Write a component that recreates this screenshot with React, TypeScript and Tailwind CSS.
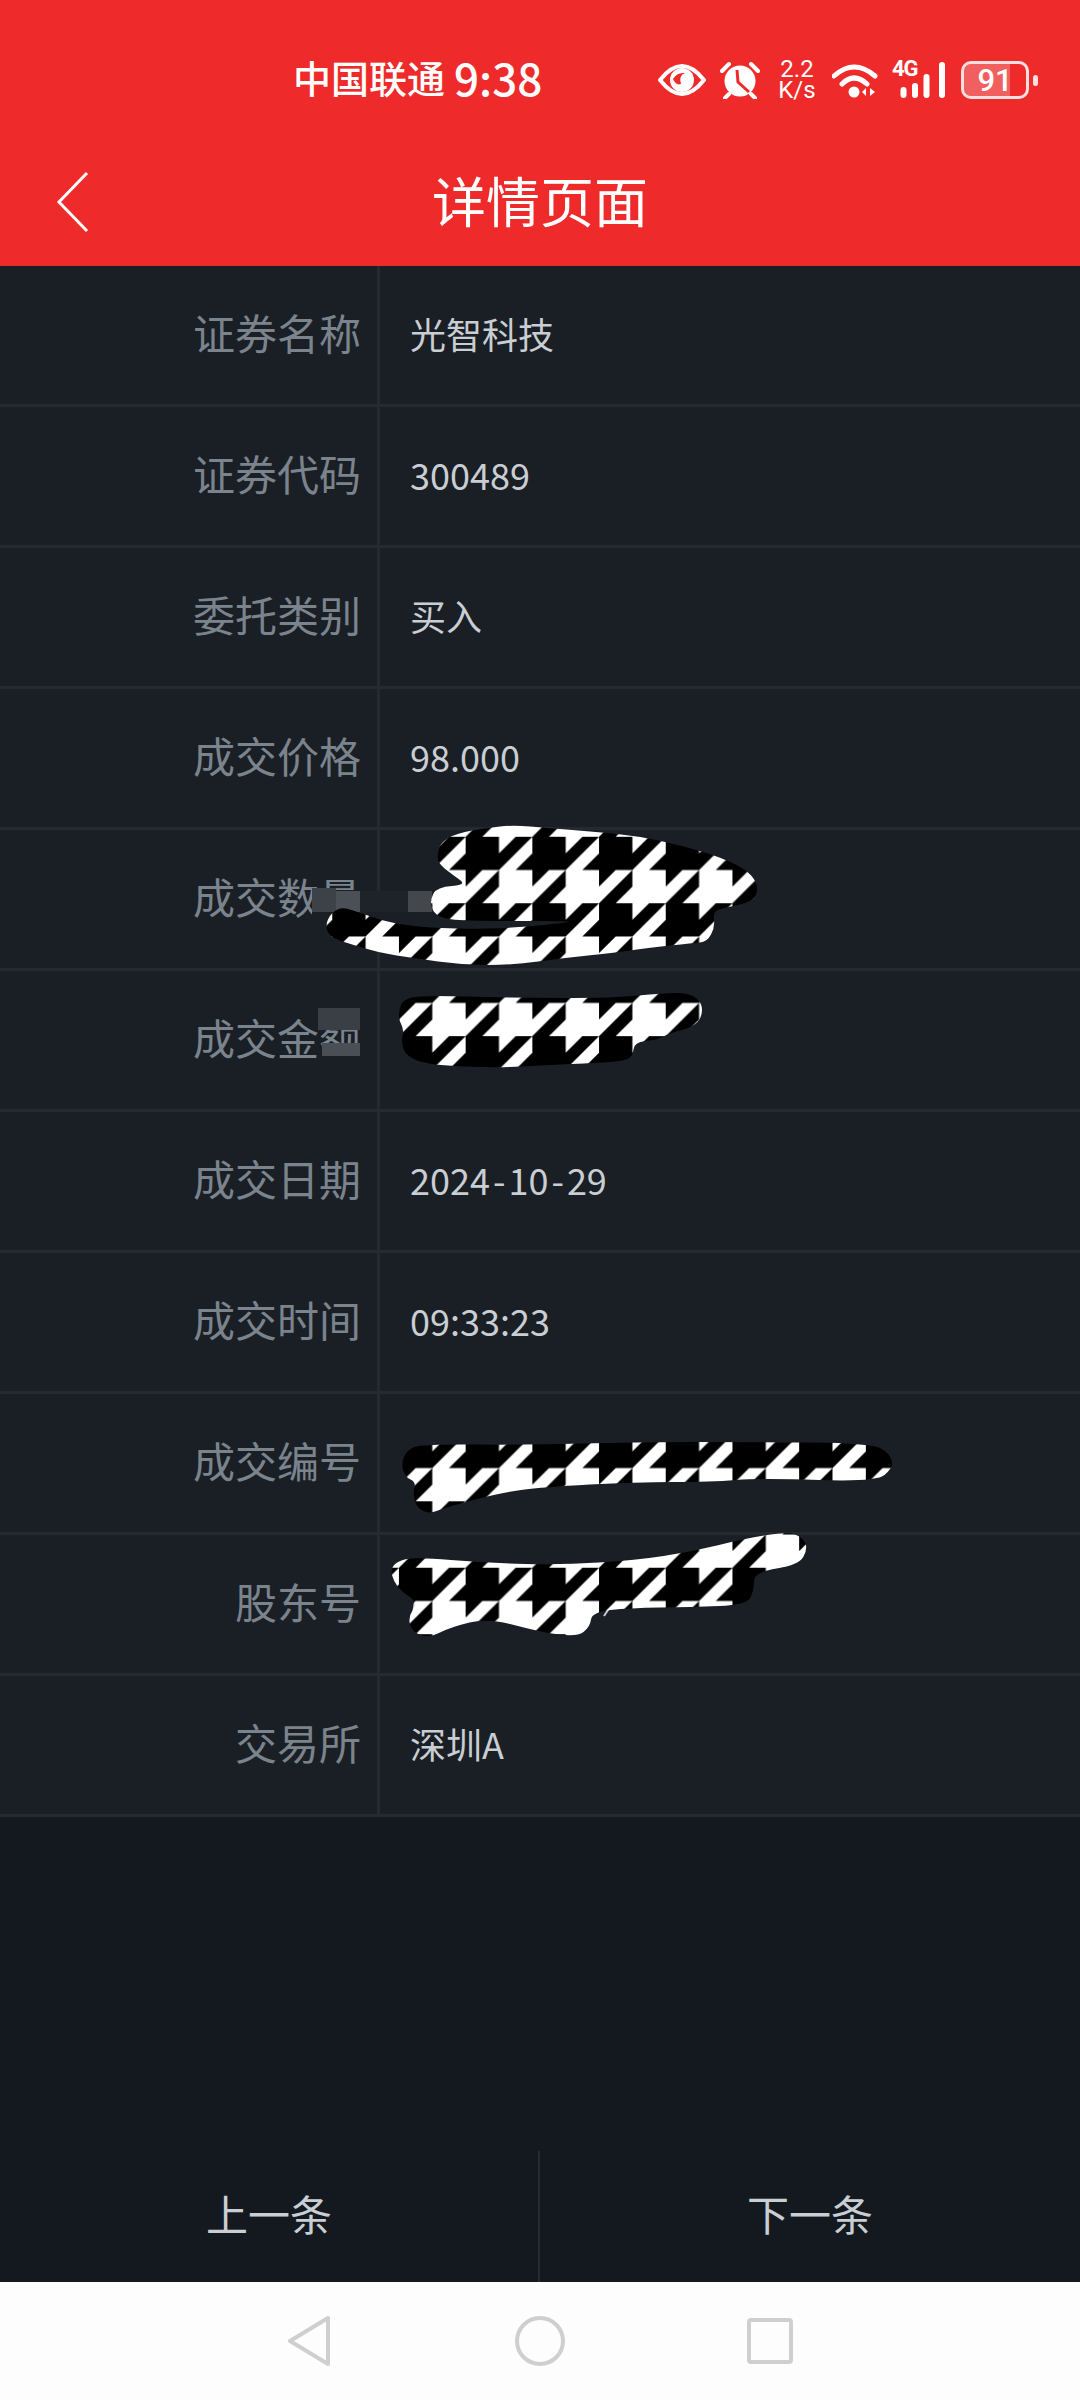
import type { ReactNode } from "react"

const font = { fontFamily: '"Noto Sans CJK SC", "Noto Sans", sans-serif' }

const rows: { label: string; value: ReactNode }[] = [
  { label: "证券名称", value: "光智科技" },
  { label: "证券代码", value: "300489" },
  { label: "委托类别", value: "买入" },
  { label: "成交价格", value: "98.000" },
  { label: "成交数量", value: "" },
  { label: "成交金额", value: "" },
  {
    label: "成交日期",
    value: (
      <>
        2024<span className="mx-[3px]">-</span>10<span className="mx-[3px]">-</span>29
      </>
    ),
  },
  { label: "成交时间", value: "09:33:23" },
  { label: "成交编号", value: "" },
  { label: "股东号", value: "" },
  { label: "交易所", value: "深圳A" },
]

// scribbles painted over the screenshot, page coordinates
const scribbles: [number, number][][] = [
  [[437,857],[440,843],[457,833],[487,828],[513,825],[547,828],[597,832],[637,836],[680,845],[723,858],[750,872],[759,888],[753,902],[723,908],[713,912],[715,927],[707,942],[693,943],[647,948],[613,953],[563,958],[513,965],[463,965],[413,958],[380,953],[347,943],[330,937],[325,925],[332,912],[343,907],[360,913],[387,922],[420,927],[463,929],[513,928],[563,923],[573,921],[493,921],[447,920],[433,913],[430,900],[437,887],[467,885],[453,875],[440,865]],
  [[399,1010],[403,1000],[420,995],[513,998],[613,998],[663,993],[690,993],[702,1003],[702,1017],[693,1027],[670,1033],[657,1040],[634,1042],[633,1057],[620,1062],[547,1065],[497,1068],[430,1065],[407,1057],[401,1043],[404,1030],[399,1020]],
  [[401,1463],[408,1448],[429,1444],[525,1445],[636,1442],[747,1442],[873,1443],[891,1455],[893,1468],[876,1482],[762,1478],[710,1482],[636,1482],[543,1487],[499,1493],[444,1508],[429,1514],[416,1507],[413,1493],[416,1482],[405,1477]],
  [[390,1573],[395,1562],[414,1557],[488,1563],[562,1565],[636,1560],[691,1552],[747,1538],[788,1532],[802,1537],[808,1548],[799,1565],[754,1572],[754,1590],[747,1605],[691,1607],[629,1608],[592,1612],[590,1627],[577,1637],[540,1632],[488,1618],[451,1627],[429,1638],[412,1632],[408,1617],[418,1602],[399,1590]],
]

function smooth(pts: [number, number][]) {
  const mid = (a: [number, number], b: [number, number]) => `${(a[0] + b[0]) / 2} ${(a[1] + b[1]) / 2}`
  let d = `M${mid(pts[pts.length - 1], pts[0])}`
  pts.forEach((p, i) => {
    d += ` Q${p[0]} ${p[1]} ${mid(p, pts[(i + 1) % pts.length])}`
  })
  return d + "Z"
}

function Overlay() {
  return (
    <svg className="absolute left-0 top-0 w-[1080px] h-[2400px] pointer-events-none" viewBox="0 0 1080 2400">
      <defs>
        <pattern id="tooth" patternUnits="userSpaceOnUse" x="465.65" y="836.8" width="66.7" height="66.45" viewBox="0 0 8 8" preserveAspectRatio="none">
          <rect width="8" height="8" fill="#000" />
          <path fill="#fff" d="M4 4H8V8H4Z M4 0H6L4 2Z M8 0V2L6 4H4Z M2 4H4L0 8V6Z M4 6V8H2Z" />
        </pattern>
      </defs>
      {/* smudges left over the hidden values */}
      <rect x="312" y="912" width="120" height="20" fill="#1a1f26" />
      <rect x="312" y="888" width="24" height="24" fill="#3d4248" />
      <rect x="336" y="891" width="24" height="21" fill="#4a5056" />
      <rect x="360" y="891" width="48" height="21" fill="#1e2329" />
      <rect x="408" y="891" width="24" height="21" fill="#44484d" />
      <rect x="318" y="1056" width="42" height="10" fill="#1a1f26" />
      <rect x="318" y="1008" width="42" height="22" fill="#3a3f46" />
      <rect x="322" y="1043" width="38" height="13" fill="#4a4f55" />
      <path d="M416 1600Q412 1608 415 1618M612 1604L604 1616" fill="none" stroke="#c7ccd1" strokeWidth="2" />
      {scribbles.map((pts, i) => (
        <path key={i} d={smooth(pts)} fill="url(#tooth)" />
      ))}
    </svg>
  )
}

function StatusIcons() {
  return (
    <div className="flex items-center ml-[118px]">
      {/* eye */}
      <svg className="w-[48px] h-[34px]" viewBox="0 0 48 34">
        <path d="M2 17Q24 -11 46 17Q24 45 2 17Z" fill="none" stroke="#fff" strokeWidth="4" strokeLinejoin="round" />
        <circle cx="24" cy="17" r="12" fill="#fff" />
        <path d="M15 16Q19 9 27 10Q20 13 23 21Q18 23 15 16Z" fill="#ee2a2a" />
      </svg>
      {/* alarm */}
      <svg className="w-[40px] h-[38px] ml-[14px]" viewBox="0 0 40 38">
        <circle cx="20" cy="20" r="15.5" fill="#fff" />
        <path d="M17 9L18 21L29 31" fill="none" stroke="#ee2a2a" strokeWidth="3" />
        <path d="M2 10L9 3M31 3L38 10M9 33L5 37M31 33L35 37" stroke="#fff" strokeWidth="4" strokeLinecap="round" />
      </svg>
      <div className="ml-[18px] w-[38px] flex flex-col items-center text-white text-[24px] leading-[21px]" style={{ fontFamily: '"Roboto", sans-serif' }}>
        <span>2.2</span>
        <span>K/s</span>
      </div>
      {/* wifi */}
      <svg className="w-[46px] h-[36px] ml-[16px]" viewBox="0 0 46 36">
        <path d="M2 14Q22 -4 43 14M10 22Q22 10 35 22" fill="none" stroke="#fff" strokeWidth="5" strokeLinecap="round" />
        <circle cx="22" cy="30" r="5.5" fill="#fff" />
        <path d="M34 26V34L30 30ZM38 26V34L43 30Z" fill="#fff" />
      </svg>
      {/* 4G + bars */}
      <div className="relative w-[54px] h-[36px] ml-[14px]">
        <span className="absolute left-0 top-[-5px] text-white text-[22px] font-bold leading-[24px] tracking-[-1px]" style={{ fontFamily: '"Roboto", sans-serif' }}>4G</span>
        <svg className="absolute left-0 top-0 w-[54px] h-[36px]" viewBox="0 0 54 36">
          <path d="M11.500 28V33M23 24V33M34.500 15V33M50 3V33" stroke="#fff" strokeWidth="6" strokeLinecap="round" />
        </svg>
      </div>
      {/* battery */}
      <div className="ml-[15px] w-[68px] h-[38px] rounded-[10px] border-[3px] border-[#ffffffd9] relative overflow-hidden">
        <div className="absolute left-0 top-0 bottom-0 w-[46px] bg-[#ffffff40]" />
        <span className="absolute inset-0 flex items-center justify-center text-white text-[31px] leading-none font-medium" style={{ fontFamily: '"Roboto", sans-serif' }}>91</span>
      </div>
      <div className="ml-[4px] w-[5px] h-[11px] rounded-full bg-[#ffffffd9]" />
    </div>
  )
}

export default function App() {
  return (
    <div className="relative w-[1080px] h-[2400px] flex flex-col bg-[#141920] overflow-hidden" style={font}>
      <header className="h-[266px] bg-[#ee2a2a] flex flex-col shrink-0">
        <div className="h-[160px] flex items-center pl-[293px] text-white">
          <span className="text-[38px] leading-none w-[161px] pb-[6px] font-medium">中国联通</span>
          <span className="text-[44px] leading-none w-[86px] pb-[6px] font-medium">9:38</span>
          <StatusIcons />
        </div>
        <div className="h-[84px] grid grid-cols-[1fr_auto_1fr] items-center">
          <svg className="w-[34px] h-[62px] ml-[56px]" viewBox="0 0 34 62">
            <path d="M31 2L3 31L31 60" fill="none" stroke="#fff" strokeWidth="3" />
          </svg>
          <h1 className="text-[54px] leading-none text-white font-normal pb-[4px]">详情页面</h1>
          <div />
        </div>
      </header>

      <section className="bg-[#1a1f26] shrink-0">
        {rows.map((row) => (
          <div key={row.label} className="h-[141px] flex border-b-[3px] border-[#252a32]">
            <div className="w-[377px] pr-[16px] pb-[8px] flex items-center justify-end text-[42px] text-[#7b848d]">{row.label}</div>
            <div className="flex-1 border-l-[3px] border-[#252a32] pl-[30px] pb-[5px] flex items-center text-[36px] text-[#c9ced3]">{row.value}</div>
          </div>
        ))}
      </section>

      <div className="flex-1" />

      <div className="h-[131px] flex shrink-0">
        <div className="w-[538px] pb-[8px] flex items-center justify-center text-[42px] text-[#c9ced3]">上一条</div>
        <div className="w-[2px] bg-[#262b33]" />
        <div className="flex-1 pb-[8px] flex items-center justify-center text-[42px] text-[#c9ced3]">下一条</div>
      </div>

      <nav className="h-[118px] bg-[#fdfdfd] flex items-center justify-center gap-[184px] shrink-0">
        <svg className="w-[44px] h-[52px]" viewBox="0 0 44 52">
          <path d="M41 3V49L3 26Z" fill="none" stroke="#cfcfcf" strokeWidth="4" strokeLinejoin="round" />
        </svg>
        <svg className="w-[50px] h-[50px]" viewBox="0 0 50 50">
          <circle cx="25" cy="25" r="23" fill="none" stroke="#cfcfcf" strokeWidth="4" />
        </svg>
        <svg className="w-[46px] h-[46px] -ml-[2px]" viewBox="0 0 46 46">
          <rect x="2" y="2" width="42" height="42" rx="2" fill="none" stroke="#cfcfcf" strokeWidth="4" />
        </svg>
      </nav>

      <Overlay />
    </div>
  )
}
